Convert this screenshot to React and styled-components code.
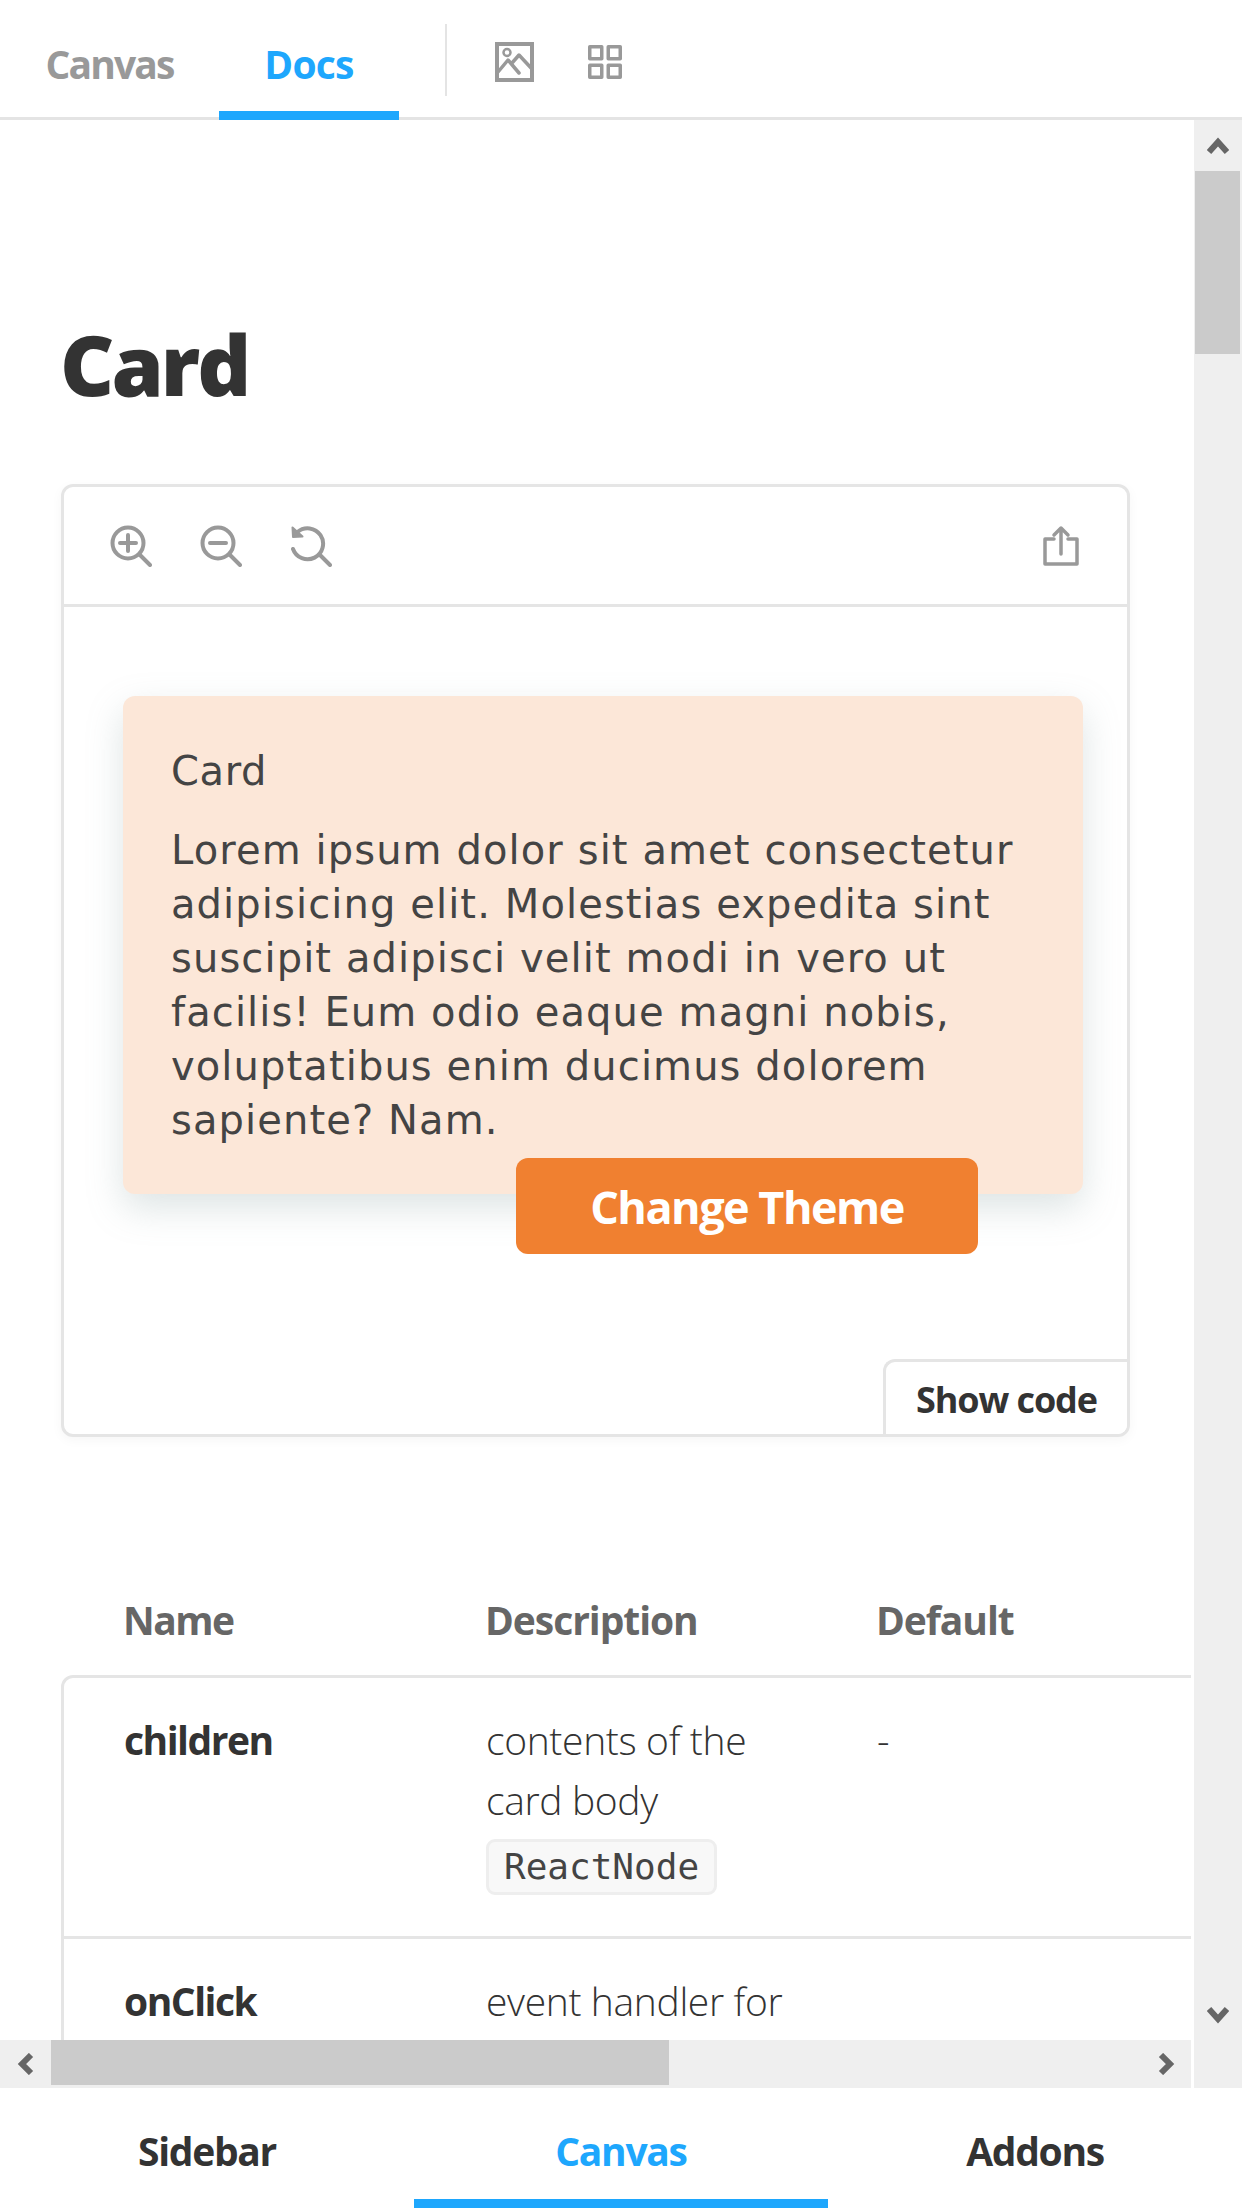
import React from 'react'
import styled, { createGlobalStyle } from 'styled-components'

const Global = createGlobalStyle`
  html, body {
    margin: 0;
    padding: 0;
    background: #fff;
    overflow: hidden;
  }
  * { box-sizing: border-box; }
`

const Page = styled.div`
  width: 1242px;
  height: 2208px;
  display: flex;
  flex-direction: column;
  font-family: "Open Sans", "Noto Sans", sans-serif;
  color: #333;
`

const TopBar = styled.div`
  height: 120px;
  flex: none;
  display: flex;
  align-items: stretch;
  border-bottom: 3px solid #e4e4e4;
`

const TopTab = styled.div`
  height: 120px;
  width: ${p => p.$w}px;
  display: flex;
  align-items: center;
  justify-content: center;
  padding-top: 15px;
  font-size: 39px;
  font-weight: 700;
  letter-spacing: ${p => (p.$active ? '-0.8px' : '-1.9px')};
  color: ${p => (p.$active ? '#1ea7fd' : '#999')};
  border-bottom: 9px solid ${p => (p.$active ? '#1ea7fd' : 'transparent')};
`

const Divider = styled.div`
  width: 2px;
  height: 72px;
  margin: 24px 48px 0 46px;
  background: #e4e4e4;
`

const TopIcons = styled.div`
  display: flex;
  align-items: center;
  gap: 53px;
  height: 117px;
  padding-top: 7px;
  color: #999;
`

const Body = styled.div`
  flex: 1;
  min-height: 0;
  display: flex;
`

const Left = styled.div`
  width: 1191px;
  margin-right: 3px;
  flex: none;
  display: flex;
  flex-direction: column;
`

const Viewport = styled.div`
  flex: 1;
  min-height: 0;
  overflow: hidden;
  padding: 0 0 0 61px;
`

const Title = styled.h1`
  margin: 188px 0 0 -1px;
  height: 176px;
  font-size: 84px;
  line-height: 112px;
  font-weight: 800;
  letter-spacing: -3px;
  color: #333;
`

const Preview = styled.div`
  position: relative;
  width: 1069px;
  height: 953px;
  border: 3px solid #e5e5e5;
  border-radius: 12px;
  box-shadow: 0 3px 12px rgba(0, 0, 0, 0.04);
  background: #fff;
  overflow: hidden;
`

const PreviewBar = styled.div`
  height: 120px;
  display: flex;
  align-items: center;
  padding: 0 45px 0 46px;
  gap: 48px;
  border-bottom: 3px solid #e5e5e5;
  color: #999;
`

const BarSpacer = styled.div`
  flex: 1;
`

const Stage = styled.div`
  padding: 89px 0 0 59px;
`

const Card = styled.div`
  width: 960px;
  height: 498px;
  padding: 48px;
  background: #fce7d8;
  border-radius: 12px;
  box-shadow: 0 14px 36px rgba(125, 150, 150, 0.26);
  font-family: "DejaVu Sans", Inter, sans-serif;
  color: #444;
`

const CardTitle = styled.div`
  font-size: 40px;
  line-height: 54px;
  letter-spacing: 0.6px;
  margin-bottom: 25px;
`

const CardText = styled.p`
  margin: 0;
  font-size: 40px;
  line-height: 54px;
  letter-spacing: 1.1px;
`

const ThemeButton = styled.button`
  display: block;
  position: relative;
  width: 462px;
  height: 96px;
  margin: -36px 0 0 393px;
  border: 0;
  border-radius: 12px;
  background: #f08030;
  color: #fff;
  font-family: "Open Sans", sans-serif;
  font-size: 45px;
  font-weight: 700;
  letter-spacing: -1.5px;
`

const ShowCode = styled.div`
  position: absolute;
  right: 0;
  bottom: 0;
  width: 244px;
  height: 75px;
  display: flex;
  align-items: center;
  justify-content: center;
  padding-top: 2px;
  border: 3px solid #e5e5e5;
  border-width: 3px 0 0 3px;
  border-top-left-radius: 12px;
  background: #fff;
  font-size: 36px;
  font-weight: 700;
  letter-spacing: -1.1px;
  color: #333;
`

const TableHead = styled.div`
  display: grid;
  grid-template-columns: 362px 391px 1fr;
  width: 2100px;
  height: 238px;
  padding: 0 0 0 62px;
  align-items: end;
  font-size: 39px;
  font-weight: 700;
  letter-spacing: -1.05px;
  color: #666;
  line-height: 50px;
  > div { padding-bottom: 30px; }
`

const HeadName = styled.div`
  letter-spacing: -1.5px;
`

const TableBody = styled.div`
  width: 2100px;
  border: 3px solid #e5e5e5;
  border-radius: 12px;
`

const Row = styled.div`
  display: grid;
  grid-template-columns: 362px 391px 1fr;
  padding: 32px 0 41px 60px;
  border-bottom: 3px solid #e5e5e5;
  font-size: 39px;
  line-height: 60px;
  letter-spacing: -0.35px;
  color: #333;
  font-weight: 300;
`

const PropName = styled.div`
  font-weight: 700;
  letter-spacing: -1.5px;
`

const Desc = styled.div`
  padding-right: 60px;
`

const Code = styled.code`
  display: inline-flex;
  align-items: center;
  height: 56px;
  padding: 0 15px;
  margin-top: 9px;
  font-family: "DejaVu Sans Mono", "Liberation Mono", monospace;
  font-size: 36px;
  font-weight: 400;
  letter-spacing: 0;
  color: #444;
  background: #f8f8f8;
  border: 3px solid #eee;
  border-radius: 9px;
  vertical-align: top;
`

const HBar = styled.div`
  height: 48px;
  flex: none;
  display: flex;
  align-items: center;
  background: #efefef;
  color: #666;
`

const ArrowCell = styled.div`
  width: ${p => p.$size}px;
  display: flex;
  align-items: center;
  justify-content: center;
  flex: none;
`

const HTrack = styled.div`
  flex: 1;
  height: 48px;
`

const HThumb = styled.div`
  width: 618px;
  height: 45px;
  background: #cbcbcb;
`

const VBar = styled.div`
  width: 48px;
  flex: none;
  display: flex;
  flex-direction: column;
  background: #efefef;
  color: #666;
`

const VEnd = styled.div`
  height: 51px;
  display: flex;
  align-items: center;
  justify-content: center;
  flex: none;
`

const VTrack = styled.div`
  flex: 1;
  padding-left: 1px;
`

const VThumb = styled.div`
  width: 45px;
  height: 183px;
  background: #cbcbcb;
`

const Corner = styled.div`
  height: 48px;
  flex: none;
`

const BottomNav = styled.div`
  height: 120px;
  flex: none;
  display: grid;
  grid-template-columns: repeat(3, 1fr);
`

const BottomTab = styled.div`
  display: flex;
  align-items: center;
  justify-content: center;
  padding-top: 14px;
  font-size: 39px;
  font-weight: 700;
  letter-spacing: -1.3px;
  color: ${p => (p.$active ? '#1ea7fd' : '#333')};
  border-bottom: 9px solid ${p => (p.$active ? '#1ea7fd' : 'transparent')};
`

const Icon = ({ w = 42, h = 42, children }) => (
  <svg width={w} height={h} viewBox={`0 0 ${w} ${h}`} fill="none" stroke="currentColor" strokeWidth="4" strokeLinecap="round" strokeLinejoin="round">
    {children}
  </svg>
)

const ZoomIn = () => (
  <Icon>
    <circle cx="18" cy="18" r="15.5" />
    <path d="M18 10v16M10 18h16M30 30l10 10" />
  </Icon>
)

const ZoomOut = () => (
  <Icon>
    <circle cx="18" cy="18" r="15.5" />
    <path d="M10 18h16M30 30l10 10" />
  </Icon>
)

const ZoomReset = () => (
  <Icon>
    <path d="M7.5 7A15.5 15.5 0 1 1 3 24M30 30l10 10" />
    <path d="M2.5 2.5l.5 9.5 9.5-.5z" fill="currentColor" strokeWidth="2" />
  </Icon>
)

const Share = () => (
  <Icon>
    <path d="M14 14H5v25h32V14H28M21 29V3M14 10l7-7 7 7" strokeWidth="3.5" />
  </Icon>
)

const ImageIcon = () => (
  <Icon w={40} h={40}>
    <rect x="2" y="2" width="35" height="36" strokeLinejoin="miter" />
    <circle cx="12" cy="10.5" r="3.5" strokeWidth="2.5" />
    <path d="M3 30l10-12 11 13M17 21l7-8 13 14" strokeWidth="3.5" />
  </Icon>
)

const GridIcon = () => (
  <Icon w={34} h={34}>
    <rect x="1.75" y="1.75" width="12" height="12" strokeWidth="3.5" />
    <rect x="20.25" y="1.75" width="12" height="12" strokeWidth="3.5" />
    <rect x="1.75" y="20.25" width="12" height="12" strokeWidth="3.5" />
    <rect x="20.25" y="20.25" width="12" height="12" strokeWidth="3.5" />
  </Icon>
)

const Chevron = ({ d, w = 22, h = 20 }) => (
  <svg width={w} height={h} viewBox={`0 0 ${w} ${h}`} fill="none" stroke="currentColor" strokeWidth="6">
    <path d={d} />
  </svg>
)

export default function App() {
  return (
    <Page>
      <Global />
      <TopBar>
        <TopTab $w={219}>Canvas</TopTab>
        <TopTab $w={180} $active>Docs</TopTab>
        <Divider />
        <TopIcons>
          <ImageIcon />
          <GridIcon />
        </TopIcons>
      </TopBar>
      <Body>
        <Left>
          <Viewport>
            <Title>Card</Title>
            <Preview>
              <PreviewBar>
                <ZoomIn />
                <ZoomOut />
                <ZoomReset />
                <BarSpacer />
                <Share />
              </PreviewBar>
              <Stage>
                <Card>
                  <CardTitle>Card</CardTitle>
                  <CardText>
                    Lorem ipsum dolor sit amet consectetur adipisicing elit. Molestias expedita sint suscipit adipisci velit modi in vero ut facilis! Eum odio eaque magni nobis, voluptatibus enim ducimus dolorem sapiente? Nam.
                  </CardText>
                </Card>
                <ThemeButton>Change Theme</ThemeButton>
              </Stage>
              <ShowCode>Show code</ShowCode>
            </Preview>
            <TableHead>
              <HeadName>Name</HeadName>
              <div>Description</div>
              <div>Default</div>
            </TableHead>
            <TableBody>
              <Row>
                <PropName>children</PropName>
                <Desc>
                  contents of the card body
                  <br />
                  <Code>ReactNode</Code>
                </Desc>
                <div>-</div>
              </Row>
              <Row>
                <PropName>onClick</PropName>
                <Desc>event handler for</Desc>
                <div />
              </Row>
            </TableBody>
          </Viewport>
          <HBar>
            <ArrowCell $size={51}><Chevron w={20} h={22} d="M15 2L6 11l9 9" /></ArrowCell>
            <HTrack><HThumb /></HTrack>
            <ArrowCell $size={51}><Chevron w={20} h={22} d="M5 2l9 9-9 9" /></ArrowCell>
          </HBar>
        </Left>
        <VBar>
          <VEnd><Chevron d="M2 16l9-10 9 10" /></VEnd>
          <VTrack><VThumb /></VTrack>
          <VEnd><Chevron d="M2 4l9 10 9-10" /></VEnd>
          <Corner />
        </VBar>
      </Body>
      <BottomNav>
        <BottomTab>Sidebar</BottomTab>
        <BottomTab $active>Canvas</BottomTab>
        <BottomTab>Addons</BottomTab>
      </BottomNav>
    </Page>
  )
}
